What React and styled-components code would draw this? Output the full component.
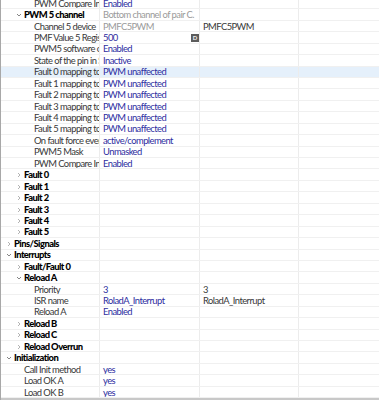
import React from 'react';
import styled, { createGlobalStyle } from 'styled-components';

const GlobalStyle = createGlobalStyle`
  html, body {
    margin: 0;
    padding: 0;
    background: #fff;
  }
  body {
    font-family: Lato, 'Noto Sans', sans-serif;
    font-size: 9.4px;
    letter-spacing: -0.55px;
  }
`;

const Frame = styled.div`
  width: 379px;
  height: 400px;
  display: flex;
  flex-direction: column;
  border-left: 1px solid #a8a8a8;
  box-sizing: border-box;
  overflow: hidden;
`;

const TreeArea = styled.div`
  flex: 1;
  overflow: hidden;
`;

const Tree = styled.div`
  margin-top: -2.1px;
`;

const BottomBar = styled.div`
  height: 2px;
  background: #c8c8c8;
`;

const Row = styled.div`
  display: grid;
  grid-template-columns: 99px 100px 99px 1fr;
  height: 11.45px;
  box-sizing: border-box;
  border-bottom: 1px solid #f0f0f0;
  background: ${(p) => (p.$selected ? '#e5f0fb' : '#fff')};
`;

const Cell = styled.div`
  display: flex;
  align-items: center;
  overflow: hidden;
  white-space: nowrap;
  border-right: 1px solid #ececec;
  padding-left: 3px;
  padding-top: 1px;
  line-height: 10px;
  color: ${(p) =>
    p.$tone === 'blue' ? '#2d2da0' : p.$tone === 'gray' ? '#9a9a9a' : '#383838'};
  &:last-child {
    border-right: none;
  }
`;

const LabelCell = styled(Cell)`
  padding-left: ${(p) => 5 + p.$level * 10}px;
  color: ${(p) => (p.$bold ? '#000' : '#383838')};
  font-weight: ${(p) => (p.$bold ? 900 : 400)};
`;

const Toggle = styled.span`
  width: 8px;
  flex: none;
  display: flex;
  align-items: center;
  justify-content: flex-start;
`;

const Badge = styled.span`
  margin-left: auto;
  width: 8px;
  height: 8px;
  background: #5c5c5c;
  color: #f4f4f4;
  font-size: 6px;
  font-weight: 700;
  letter-spacing: 0;
  display: flex;
  align-items: center;
  justify-content: center;
  line-height: 1;
`;

const Chevron = ({ open }) => (
  <svg width="6" height="6" viewBox="0 0 6 6">
    {open ? (
      <polyline points="1,2 3,4 5,2" fill="none" stroke="#777" strokeWidth="0.9" />
    ) : (
      <polyline points="2,1 4,3 2,5" fill="none" stroke="#aaa" strokeWidth="0.9" />
    )}
  </svg>
);

const rows = [
  { level: 2, label: 'PWM Compare Inversion', value: 'Enabled', tone: 'blue' },
  { level: 1, label: 'PWM 5 channel', bold: true, toggle: 'open', value: 'Bottom channel of pair C.', tone: 'gray' },
  { level: 2, label: 'Channel 5 device', value: 'PMFC5PWM', tone: 'gray', col3: 'PMFC5PWM' },
  { level: 2, label: 'PMF Value 5 Register', value: '500', tone: 'blue', badge: 'D' },
  { level: 2, label: 'PWM5 software control', value: 'Enabled', tone: 'blue' },
  { level: 2, label: 'State of the pin in SW', value: 'Inactive', tone: 'blue' },
  { level: 2, label: 'Fault 0 mapping to PWM', value: 'PWM unaffected', tone: 'blue', selected: true },
  { level: 2, label: 'Fault 1 mapping to PWM', value: 'PWM unaffected', tone: 'blue' },
  { level: 2, label: 'Fault 2 mapping to PWM', value: 'PWM unaffected', tone: 'blue' },
  { level: 2, label: 'Fault 3 mapping to PWM', value: 'PWM unaffected', tone: 'blue' },
  { level: 2, label: 'Fault 4 mapping to PWM', value: 'PWM unaffected', tone: 'blue' },
  { level: 2, label: 'Fault 5 mapping to PWM', value: 'PWM unaffected', tone: 'blue' },
  { level: 2, label: 'On fault force event', value: 'active/complement', tone: 'blue' },
  { level: 2, label: 'PWM5 Mask', value: 'Unmasked', tone: 'blue' },
  { level: 2, label: 'PWM Compare Inversion', value: 'Enabled', tone: 'blue' },
  { level: 1, label: 'Fault 0', bold: true, toggle: 'closed' },
  { level: 1, label: 'Fault 1', bold: true, toggle: 'closed' },
  { level: 1, label: 'Fault 2', bold: true, toggle: 'closed' },
  { level: 1, label: 'Fault 3', bold: true, toggle: 'closed' },
  { level: 1, label: 'Fault 4', bold: true, toggle: 'closed' },
  { level: 1, label: 'Fault 5', bold: true, toggle: 'closed' },
  { level: 0, label: 'Pins/Signals', bold: true, toggle: 'closed' },
  { level: 0, label: 'Interrupts', bold: true, toggle: 'open' },
  { level: 1, label: 'Fault/Fault 0', bold: true, toggle: 'closed' },
  { level: 1, label: 'Reload A', bold: true, toggle: 'open' },
  { level: 2, label: 'Priority', value: '3', tone: 'blue', col3: '3' },
  { level: 2, label: 'ISR name', value: 'RoladA_Interrupt', tone: 'blue', col3: 'RoladA_Interrupt' },
  { level: 2, label: 'Reload A', value: 'Enabled', tone: 'blue' },
  { level: 1, label: 'Reload B', bold: true, toggle: 'closed' },
  { level: 1, label: 'Reload C', bold: true, toggle: 'closed' },
  { level: 1, label: 'Reload Overrun', bold: true, toggle: 'closed' },
  { level: 0, label: 'Initialization', bold: true, toggle: 'open' },
  { level: 1, label: 'Call Init method', value: 'yes', tone: 'blue' },
  { level: 1, label: 'Load OK A', value: 'yes', tone: 'blue' },
  { level: 1, label: 'Load OK B', value: 'yes', tone: 'blue' },
];

const App = () => {
  return (
    <>
      <GlobalStyle />
      <Frame>
        <TreeArea>
          <Tree>
            {rows.map((r, i) => (
              <Row key={i} $selected={r.selected}>
                <LabelCell $level={r.level} $bold={r.bold}>
                  <Toggle>{r.toggle && <Chevron open={r.toggle === 'open'} />}</Toggle>
                  {r.label}
                </LabelCell>
                <Cell $tone={r.tone}>
                  {r.value}
                  {r.badge && <Badge>{r.badge}</Badge>}
                </Cell>
                <Cell>{r.col3}</Cell>
                <Cell />
              </Row>
            ))}
          </Tree>
        </TreeArea>
        <BottomBar />
      </Frame>
    </>
  );
};

export default App;
